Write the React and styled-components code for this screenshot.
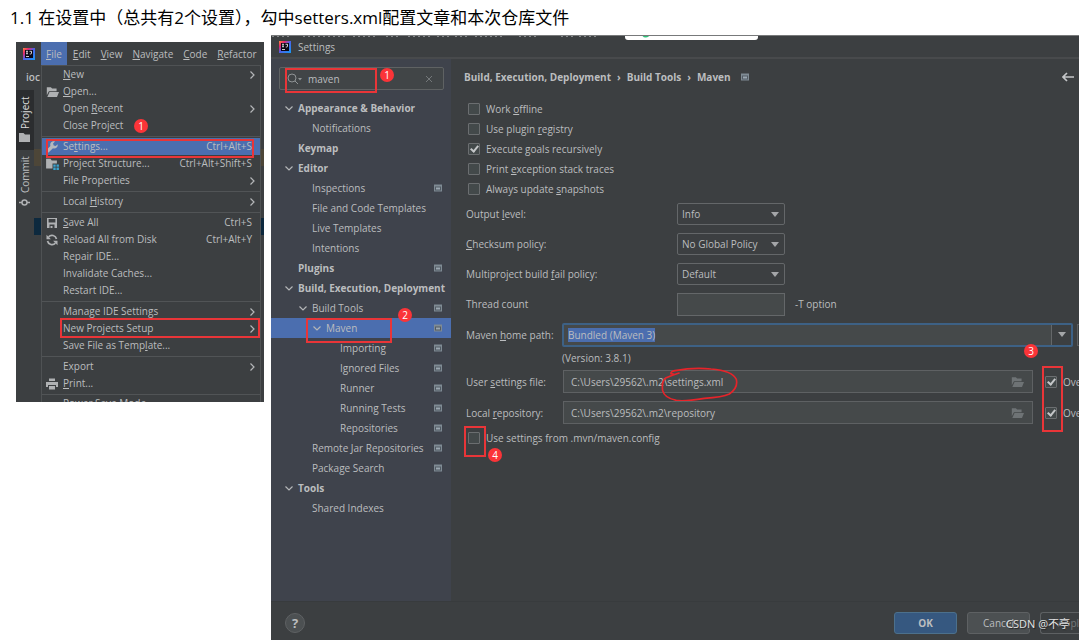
import { useEffect, useRef } from "react";
import styled, { createGlobalStyle, css } from "styled-components";

const menuTitles = ["_File", "_Edit", "_View", "_Navigate", "_Code", "_Refactor"];

const menuGroups = [
    [
        { text: "_New", sub: true },
        { text: "_Open...", icon: "folder" },
        { text: "Open _Recent", sub: true },
        { text: "Close Project" },
    ],
    [
        { text: "Se_ttings...", icon: "wrench", keys: "Ctrl+Alt+S", active: true },
        { text: "Project Structure...", icon: "structure", keys: "Ctrl+Alt+Shift+S" },
        { text: "File Properties", sub: true },
    ],
    [{ text: "Local _History", sub: true }],
    [
        { text: "_Save All", icon: "save", keys: "Ctrl+S" },
        { text: "Reload All from Disk", icon: "reload", keys: "Ctrl+Alt+Y" },
        { text: "Repair IDE..." },
        { text: "Invalidate Caches..." },
        { text: "Restart IDE..." },
    ],
    [
        { text: "Manage IDE Settings", sub: true },
        { text: "New Projects Setup", sub: true },
        { text: "Save File as Temp_late..." },
    ],
    [
        { text: "Export", sub: true },
        { text: "_Print...", icon: "print" },
    ],
    [{ text: "Power Save Mode", cut: true }],
];

const tree = [
    { text: "Appearance & Behavior", level: 0, open: true },
    { text: "Notifications", level: 1 },
    { text: "Keymap", level: 0 },
    { text: "Editor", level: 0, open: true },
    { text: "Inspections", level: 1, mark: true },
    { text: "File and Code Templates", level: 1 },
    { text: "Live Templates", level: 1 },
    { text: "Intentions", level: 1 },
    { text: "Plugins", level: 0, mark: true },
    { text: "Build, Execution, Deployment", level: 0, open: true },
    { text: "Build Tools", level: 1, open: true, mark: true },
    { text: "Maven", level: 2, open: true, mark: true, active: true },
    { text: "Importing", level: 3, mark: true },
    { text: "Ignored Files", level: 3, mark: true },
    { text: "Runner", level: 3, mark: true },
    { text: "Running Tests", level: 3, mark: true },
    { text: "Repositories", level: 3, mark: true },
    { text: "Remote Jar Repositories", level: 1, mark: true },
    { text: "Package Search", level: 1, mark: true },
    { text: "Tools", level: 0, open: true },
    { text: "Shared Indexes", level: 1 },
];

const options = [
    { text: "Work _offline" },
    { text: "Use plugin _registry" },
    { text: "Execute _goals recursively", checked: true },
    { text: "Print _exception stack traces" },
    { text: "Always update _snapshots" },
];

const policies = [
    { id: "output", text: "Output _level:", value: "Info" },
    { id: "checksum", text: "_Checksum policy:", value: "No Global Policy" },
    { id: "fail", text: "Multiproject build _fail policy:", value: "Default" },
];

// "_" stands before the letter that gets the underline
function Mnemonic({ text }){
    const at = text.indexOf("_");
    if (at < 0) return <span>{text}</span>;
    return (
        <span>
            {text.slice(0, at)}<u>{text[at + 1]}</u>{text.slice(at + 2)}
        </span>
    );
}

function Logo(){
    return (
        <svg width="12" height="12" viewBox="0 0 24 24" aria-hidden="true">
            <defs>
                <linearGradient id="idea" x1="0" y1="0" x2="1" y2="1">
                    <stop offset="0" stopColor="#fc8b3a" />
                    <stop offset="0.25" stopColor="#e8286c" />
                    <stop offset="0.5" stopColor="#4b62e8" />
                    <stop offset="1" stopColor="#159bf5" />
                </linearGradient>
            </defs>
            <rect width="24" height="24" fill="url(#idea)" />
            <rect x="4" y="4" width="16" height="16" fill="#0b0715" />
            <path d="M6 6.500h4M8 6.500v5M6 11.500h4M13 6.500h4v4q0 1.500-2 1.500h-1.500M6 17h6" stroke="#fff" strokeWidth="1.600" fill="none" />
        </svg>
    );
}

function Chevron({ right }){
    return (
        <svg width="8" height="8" viewBox="0 0 8 8" fill="none" stroke="#b4b6b8" strokeWidth="1.200" aria-hidden="true">
            <path d={right ? "M2.500 0.500 6 4 2.500 7.500" : "M0.500 2.500 4 6 7.500 2.500"} />
        </svg>
    );
}

function FolderIcon({ color = "#afb1b3" }){
    return (
        <svg width="13" height="12" viewBox="0 0 16 14" fill={color} aria-hidden="true">
            <path d="M1 1h5l1.500 1.800H13V6H3.600L1 11z" />
            <path d="M4.300 7H16l-2.500 6H1.600z" />
        </svg>
    );
}

function ProjectMark(){
    return (
        <svg width="8" height="8" viewBox="0 0 8 8" aria-hidden="true">
            <path d="M0 0.500h8v7H0z" fill="#7f8b94" />
            <path d="M1 2.500h6v4H1z" fill="#535b64" />
            <path d="M2 3.500h4v2H2z" fill="#9aa7b0" />
        </svg>
    );
}

function MenuIcon({ name }){
    if (name === "folder") return <FolderIcon />;
    if (name === "wrench") return (
        <svg width="12" height="12" viewBox="0 0 16 16" fill="#b4b8bd" aria-hidden="true">
            <path d="M15.500 4.200 12.900 6.800 10.300 6 9.400 3.300 12 .8C10.200 0 8.200.4 6.900 1.700 5.600 3 5.300 4.900 5.900 6.500L.9 11.600c-.9.900-.9 2.300 0 3.200s2.300.9 3.200 0L9.300 9.700c1.700.7 3.600.4 4.900-.9 1.200-1.200 1.600-3 1.300-4.600z" />
        </svg>
    );
    if (name === "structure") return (
        <svg width="13" height="12" viewBox="0 0 16 15" aria-hidden="true">
            <path d="M0 1h5.500L7 3h6.500v4H8v6H0z" fill="#afb1b3" />
            <path d="M9 8h3v3H9zM13 8h3v3h-3zM9 12h3v3H9zM13 12h3v3h-3z" fill="#3ba3cf" />
        </svg>
    );
    if (name === "save") return (
        <svg width="12" height="12" viewBox="0 0 12 12" aria-hidden="true">
            <path fillRule="evenodd" fill="#afb1b3" d="M1 1h10v10H1zM2.600 2v3.400h6.800V2zM3.500 7.500V11h5V7.500z" />
            <path d="M4.500 9h2v2h-2z" fill="#afb1b3" />
        </svg>
    );
    if (name === "reload") return (
        <svg width="12" height="12" viewBox="0 0 12 12" aria-hidden="true">
            <path d="M10.500 5A4.600 4.600 0 0 0 2.600 2.900M1.500 7a4.600 4.600 0 0 0 7.900 2.100" fill="none" stroke="#afb1b3" strokeWidth="1.700" />
            <path d="M0.500 0.800v4.400h4.400zM11.500 11.200V6.800H7.100z" fill="#afb1b3" />
        </svg>
    );
    if (name === "print") return (
        <svg width="12" height="12" viewBox="0 0 12 12" fill="#afb1b3" aria-hidden="true">
            <path d="M3 0.500h6V3H3zM0 4h12v5h-2V7H2v2H0zM3 8h6v3.500H3z" />
        </svg>
    );
    return null;
}

function FileMenu(){
    return (
        <IdePanel>
            <MenuBar>
                <Logo />
                {menuTitles.map((title, i) => (
                    <MenuTitle key={title} $active={i === 0}><Mnemonic text={title} /></MenuTitle>
                ))}
            </MenuBar>
            <IdeBody>
                <IdeLeft>
                    <Crumb>ioc</Crumb>
                    <IdeTools>
                        <ToolColumn>
                            <ToolTab $active>
                                Project
                                <svg width="11" height="9" viewBox="0 0 11 9" fill="#afb1b3" aria-hidden="true"><path d="M0 0h4.500l1.500 1.500h5V9H0z" /></svg>
                            </ToolTab>
                            <ToolTab>
                                Commit
                                <svg width="11" height="11" viewBox="0 0 11 11" fill="none" stroke="#afb1b3" strokeWidth="1.500" aria-hidden="true">
                                    <circle cx="5.500" cy="5.500" r="2.500" /><path d="M0 5.500h3M8 5.500h3" />
                                </svg>
                            </ToolTab>
                        </ToolColumn>
                        <EditorEdge $width={7} $start={59} />
                    </IdeTools>
                </IdeLeft>
                <Menu>
                    {menuGroups.map((group, i) => (
                        <MenuGroup key={i}>
                            {group.map((item) => (
                                <MenuRow key={item.text} $active={item.active} $cut={item.cut}>
                                    <IconSlot>{item.icon && <MenuIcon name={item.icon} />}</IconSlot>
                                    <Mnemonic text={item.text} />
                                    {item.keys && <Keys>{item.keys}</Keys>}
                                    {item.sub && <SubArrow><Chevron right /></SubArrow>}
                                </MenuRow>
                            ))}
                        </MenuGroup>
                    ))}
                </Menu>
                <EditorEdge $width={3} $start={84} />
            </IdeBody>
            <Frame style={{ left: 30, top: 97, width: 208, height: 19 }} />
            <Frame style={{ left: 44, top: 276, width: 200, height: 20 }} />
            <Badge style={{ left: 118, top: 77 }}>1</Badge>
        </IdePanel>
    );
}

function Sidebar(){
    return (
        <Side>
            <SearchBox>
                <svg width="15" height="12" viewBox="0 0 15 12" fill="none" stroke="#8f9395" aria-hidden="true">
                    <circle cx="5" cy="5" r="4" /><path d="m8 8 3 3" /><path d="M11 5h4l-2 2.500z" fill="#8f9395" stroke="none" />
                </svg>
                <SearchInput aria-label="Search settings" defaultValue="maven" />
                <ClearButton aria-label="Clear">
                    <svg width="8" height="8" viewBox="0 0 8 8" stroke="#74787a" aria-hidden="true"><path d="m1 1 6 6M7 1 1 7" /></svg>
                </ClearButton>
            </SearchBox>
            <Tree>
                {tree.map((node) => (
                    <TreeRow key={node.text} $level={node.level} $active={node.active}>
                        <Toggle>{node.open && <Chevron />}</Toggle>
                        <TreeText>{node.text}</TreeText>
                        {node.mark && <ProjectMark />}
                    </TreeRow>
                ))}
            </Tree>
        </Side>
    );
}

function PathRow({ id, text, value, circled }){
    return (
        <FormRow $tall>
            <PathLabel htmlFor={id}><Mnemonic text={text} /></PathLabel>
            <PathField>
                <PathInput id={id} defaultValue={value} />
                <FolderIcon color="#6e7375" />
                {circled && (
                    <Scribble viewBox="0 0 234 108" aria-hidden="true">
                        <path d="M39 25 30 23Q28 17 42 14Q100 3 150 9Q214 14 226 40Q232 66 205 84Q184 94 130 97Q70 107 46 103Q10 96 5 74Q1 46 14 36Q30 29 54 21" />
                    </Scribble>
                )}
            </PathField>
            <Override>
                <Check type="checkbox" defaultChecked />
                Override
            </Override>
        </FormRow>
    );
}

function MavenPage(){
    const home = useRef(null);

    useEffect(() => {
        home.current.focus();
        home.current.select();
    }, []);

    return (
        <Page>
            <Path>
                Build, Execution, Deployment <i>›</i> Build Tools <i>›</i> Maven
                <PathMark><ProjectMark /></PathMark>
                <BackButton aria-label="Back">
                    <svg width="12" height="10" viewBox="0 0 12 10" fill="none" stroke="#c4c6c8" strokeWidth="1.700" aria-hidden="true"><path d="M5 1 1 5l4 4M1 5h11" /></svg>
                </BackButton>
            </Path>
            {options.map((option) => (
                <CheckRow key={option.text}>
                    <Check type="checkbox" defaultChecked={option.checked} />
                    <Mnemonic text={option.text} />
                </CheckRow>
            ))}
            {policies.map((policy) => (
                <FormRow key={policy.id}>
                    <FormLabel htmlFor={policy.id}><Mnemonic text={policy.text} /></FormLabel>
                    <SelectBox>
                        <Select id={policy.id} defaultValue={policy.value}>
                            <option>{policy.value}</option>
                        </Select>
                        <Caret />
                    </SelectBox>
                </FormRow>
            ))}
            <FormRow>
                <FormLabel htmlFor="threads">Thread count</FormLabel>
                <ThreadInput id="threads" />
                <Hint>-T option</Hint>
            </FormRow>
            <FormRow $tall>
                <PathLabel htmlFor="home"><Mnemonic text="Maven _home path:" /></PathLabel>
                <Combo>
                    <HomeInput id="home" ref={home} defaultValue="Bundled (Maven 3)" />
                    <ComboButton aria-label="Show list"><Caret /></ComboButton>
                </Combo>
                <BrowseEdge />
            </FormRow>
            <Version>(Version: 3.8.1)</Version>
            <PathRow id="user" text="User _settings file:" value="C:\Users\29562\.m2\settings.xml" circled />
            <PathRow id="repo" text="Local _repository:" value="C:\Users\29562\.m2\repository" />
            <CheckRow>
                <Check type="checkbox" />
                Use settings from .mvn/maven.config
            </CheckRow>
            <Frame style={{ left: 13, top: 367, width: 22, height: 31 }} />
            <Badge style={{ left: 37, top: 389 }}>4</Badge>
            <Frame style={{ right: 16, top: 307, width: 21, height: 66 }} />
            <Badge style={{ right: 41, top: 285 }}>3</Badge>
        </Page>
    );
}

export default function App(){
    return (
        <>
            <GlobalStyle />
            <Heading>1.1 在设置中（总共有2个设置），勾中setters.xml配置文章和本次仓库文件</Heading>
            <Columns>
                <FileMenu />
                <SettingsWindow>
                    <BackdropEdge aria-hidden="true">
                        <path d="M1 1H18M32 1h45M82 1h24M115 1h14M137 1h22M166 1h12M184 1h14M204 1h28M248 1h20M290 1h12M308 1h18" />
                    </BackdropEdge>
                    <Popup>
                        <svg width="14" height="5" viewBox="0 0 14 5" aria-hidden="true"><path d="M4 0q2 3 6 0" fill="none" stroke="#2fc27a" strokeWidth="2" /><path d="M0 0h2v1H0z" fill="#999" /></svg>
                    </Popup>
                    <TitleBar><Logo />Settings</TitleBar>
                    <WindowBody>
                        <Sidebar />
                        <MavenPage />
                    </WindowBody>
                    <Footer>
                        <HelpButton>?</HelpButton>
                        <Button $primary>OK</Button>
                        <Button>Cancel</Button>
                        <Button $cut disabled>Apply</Button>
                    </Footer>
                    <Frame style={{ left: 14, top: 32, width: 92, height: 25 }} />
                    <Badge style={{ left: 109, top: 32 }}>1</Badge>
                    <Frame style={{ left: 35, top: 282, width: 86, height: 25 }} />
                    <Badge style={{ left: 127, top: 272 }}>2</Badge>
                    <Watermark>CSDN @不亭</Watermark>
                </SettingsWindow>
            </Columns>
        </>
    );
}

const GlobalStyle = createGlobalStyle`
    *, *::after {
        box-sizing: border-box;
    }

    body {
        margin: 0;
        background: #fff;
        color: #bbbdbf;
        font-family: "Open Sans", "Noto Sans", "Noto Sans CJK SC", sans-serif;
        font-size: 10px;
        overflow: hidden;
    }

    button, input, select {
        font: inherit;
        color: inherit;
        margin: 0;
        padding: 0;
        border: none;
        background: none;
        outline: none;
    }

    svg {
        flex: none;
        display: block;
    }

    u {
        text-underline-offset: 1px;
    }
`;

const Heading = styled.h1`
    margin: 0;
    padding: 6px 0 5px 10px;
    line-height: 24px;
    font-family: "Open Sans", "Noto Sans CJK SC", sans-serif;
    font-size: 17px;
    font-weight: 400;
    color: #000;
    white-space: nowrap;
`;

const Columns = styled.main`
    display: grid;
    grid-template-columns: 248px 1fr;
    gap: 7px;
    align-items: start;
    padding: 0 8px 0 16px;
`;

const IdePanel = styled.section`
    position: relative;
    margin-top: 7px;
    background: #3c3f41;
`;

const MenuBar = styled.nav`
    display: flex;
    align-items: center;
    height: 23px;
    padding-left: 7px;

    svg{
        margin-right: 6px;
    }
`;

const MenuTitle = styled.button`
    height: 23px;
    padding: 0 5px;
    background: ${({ $active }) => ($active ? "#4b6eaf" : "transparent")};

    &:first-of-type{
        margin-right: 1px;
    }
`;

const IdeBody = styled.div`
    display: flex;
`;

const IdeLeft = styled.div`
    display: flex;
    flex-direction: column;
    flex: none;
    width: 25px;
`;

const IdeTools = styled.div`
    display: flex;
    flex: 1;
`;

const ToolColumn = styled.div`
    flex: none;
    width: 18px;
`;

const Crumb = styled.div`
    height: 25px;
    line-height: 25px;
    padding-left: 10px;
    overflow: hidden;
    font-weight: 600;
`;

const ToolTab = styled.button`
    display: flex;
    flex-direction: row-reverse;
    align-items: center;
    justify-content: flex-end;
    gap: 4px;
    width: 18px;
    height: 60px;
    padding: ${({ $active }) => ($active ? "8px" : "2px")} 0;
    writing-mode: vertical-rl;
    transform: rotate(180deg);
    background: ${({ $active }) => ($active ? "#2b2d2f" : "transparent")};
    color: ${({ $active }) => ($active ? "#dcdddd" : "inherit")};

    svg{
        transform: rotate(180deg);
    }
`;

const EditorEdge = styled.div`
    flex: none;
    width: ${({ $width }) => $width}px;
    background: ${({ $start }) => `linear-gradient(
        #3c3f41 ${$start}px, #4d4638 ${$start}px, #4d4638 ${$start + 17}px, #3c3f41 ${$start + 17}px,
        #3c3f41 ${$start + 69}px, #0d293e ${$start + 69}px, #0d293e ${$start + 86}px, #3c3f41 ${$start + 86}px
    )`};
`;

const Menu = styled.div`
    flex: 1;
    min-width: 0;
    border: 1px solid #4f5254;
    border-bottom: none;
`;

const MenuGroup = styled.div`
    & + &{
        padding-top: 1px;
        margin-top: 2px;
        border-top: 1px solid #515456;
    }
`;

const MenuRow = styled.button`
    display: flex;
    align-items: center;
    width: 100%;
    height: ${({ $cut }) => ($cut ? "6px" : "17px")};
    padding: 0 8px 0 4px;
    line-height: 17px;
    white-space: nowrap;
    background: ${({ $active }) => ($active ? "#4b6eaf" : "transparent")};
    ${({ $cut }) => $cut && css`
        align-items: flex-start;
        line-height: 14px;
        overflow: hidden;
    `}
`;

const IconSlot = styled.span`
    width: 17px;
`;

const Keys = styled.span`
    margin-left: auto;
`;

const SubArrow = styled.span`
    margin-left: auto;
    margin-right: -4px;
`;

const SettingsWindow = styled.section`
    position: relative;
    display: flex;
    flex-direction: column;
    min-height: calc(100vh - 35px);
    min-width: 0;
    overflow: hidden;
    background: #3c3f41;
    border-top: 1px solid #77797a;
`;

const BackdropEdge = styled.svg`
    position: absolute;
    top: -1px;
    left: 0;
    width: 340px;
    height: 2px;
    stroke: #85888a;
    stroke-width: 2;
    stroke-dasharray: 2 3;
`;

const Popup = styled.div`
    position: absolute;
    top: -1px;
    left: 354px;
    width: 133px;
    height: 5px;
    padding-left: 14px;
    background: #fff;
    border-radius: 0 0 3px 3px;
`;

const TitleBar = styled.header`
    display: flex;
    align-items: center;
    gap: 7px;
    height: 23px;
    padding-left: 8px;
    border-bottom: 2px solid #484a4c;
`;

const WindowBody = styled.div`
    display: flex;
    flex: 1;
`;

const Side = styled.aside`
    width: 180px;
    padding-top: 8px;
    background: #3f434c;
`;

const SearchBox = styled.div`
    display: flex;
    align-items: center;
    gap: 6px;
    height: 23px;
    margin: 0 7px 8px 8px;
    padding: 0 10px 0 7px;
    border: 1px solid #5f6263;
    background: #414547;
    border-radius: 2px;
`;

const SearchInput = styled.input`
    flex: 1;
    min-width: 0;
`;

const ClearButton = styled.button`
    display: flex;
`;

const Tree = styled.div`
    display: flex;
    flex-direction: column;
`;

const TreeRow = styled.div`
    display: flex;
    align-items: center;
    height: 20px;
    padding-left: ${({ $level }) => 14 + $level * 14}px;
    padding-right: 9px;
    white-space: nowrap;
    font-weight: ${({ $level }) => ($level === 0 ? 700 : 400)};
    background: ${({ $active }) => ($active ? "#4b6eaf" : "transparent")};
`;

const Toggle = styled.span`
    flex: none;
    width: 13px;
`;

const TreeText = styled.span`
    flex: 1;
    min-width: 0;
`;

const Page = styled.div`
    position: relative;
    flex: 1;
    min-width: 0;
    padding-left: 13px;
`;

const Path = styled.div`
    display: flex;
    align-items: center;
    gap: 6px;
    height: 36px;
    margin-bottom: 4px;
    padding-right: 5px;
    font-weight: 700;

    i{
        font-style: normal;
    }
`;

const PathMark = styled.span`
    margin-left: 4px;
`;

const BackButton = styled.button`
    margin-left: auto;
`;

const CheckRow = styled.label`
    display: flex;
    align-items: center;
    gap: 6px;
    height: 20px;
    padding-left: 4px;
`;

const Check = styled.input`
    appearance: none;
    flex: none;
    width: 12px;
    height: 12px;
    border: 1px solid #6b6e70;
    border-radius: 1px;
    background: #43494a;

    &:checked::after{
        content: "";
        display: block;
        width: 5px;
        height: 8px;
        margin: 0 0 0 3px;
        border: solid #c4c6c8;
        border-width: 0 2px 2px 0;
        transform: rotate(40deg);
    }
`;

const FormRow = styled.div`
    display: flex;
    align-items: center;
    height: ${({ $tall }) => ($tall ? "31px" : "30px")};
    padding-left: 2px;
`;

const FormLabel = styled.label`
    width: 211px;
`;

const PathLabel = styled.label`
    flex: none;
    width: 97px;
    white-space: nowrap;
`;

const SelectBox = styled.div`
    display: flex;
    align-items: center;
    position: relative;
    width: 108px;
    height: 22px;
    border: 1px solid #646769;
    border-radius: 2px;
`;

const Select = styled.select`
    appearance: none;
    width: 100%;
    height: 20px;
    padding-left: 4px;
`;

const Caret = styled.span`
    width: 0;
    height: 0;
    border: 4px solid transparent;
    border-top: 5px solid #a4a6a8;
    border-bottom: none;

    ${SelectBox} &{
        position: absolute;
        right: 5px;
        pointer-events: none;
    }
`;

const ThreadInput = styled.input`
    width: 108px;
    height: 23px;
    border: 1px solid #646769;
    background: #45494a;
`;

const Hint = styled.span`
    margin-left: 10px;
`;

const Combo = styled.div`
    display: flex;
    flex: 1;
    align-items: stretch;
    min-width: 0;
    height: 24px;
    margin-right: 4px;
    margin-left: -1px;
    border: 2px solid #3d6185;
    border-radius: 2px;
    background: #45494a;
`;

const HomeInput = styled.input`
    flex: 1;
    min-width: 0;
    padding-left: 4px;

    &::selection{
        background: #4b6eaf;
        color: #bbbdbf;
    }
`;

const ComboButton = styled.button`
    display: flex;
    align-items: center;
    justify-content: center;
    width: 20px;
    border-left: 1px solid #646769;
    background: #3c3f41;
`;

const BrowseEdge = styled.span`
    width: 2px;
    height: 22px;
    border: 1px solid #5e6163;
    border-right: none;
`;

const Version = styled.div`
    height: 16px;
    line-height: 16px;
    padding-left: 98px;
`;

const PathField = styled.div`
    position: relative;
    display: flex;
    align-items: center;
    flex: 1;
    min-width: 0;
    height: 23px;
    padding-right: 8px;
    border: 1px solid #5e6163;
    background: #45494a;
`;

const PathInput = styled.input`
    flex: 1;
    min-width: 0;
    padding-left: 7px;
`;

const Scribble = styled.svg`
    position: absolute;
    left: 97px;
    top: -5px;
    width: 78px;
    height: 36px;
    fill: none;
    stroke: #e6242a;
    stroke-width: 5;
    stroke-linecap: round;
`;

const Override = styled.label`
    display: flex;
    align-items: center;
    gap: 6px;
    flex: none;
    width: 34px;
    margin-left: 12px;
    overflow: hidden;
`;

const Footer = styled.footer`
    display: flex;
    align-items: center;
    gap: 10px;
    height: 39px;
    padding: 4px 0 0 14px;
    border-top: 1px solid #383b3d;
`;

const HelpButton = styled.button`
    width: 20px;
    height: 20px;
    margin-right: auto;
    border: 1px solid #5e6163;
    border-radius: 50%;
    background: #4c5052;
    font-size: 13px;
    line-height: 18px;
    font-weight: 700;
`;

const Button = styled.button`
    flex: none;
    width: ${({ $cut }) => ($cut ? "39px" : "63px")};
    height: 22px;
    border: 1px solid ${({ $primary }) => ($primary ? "#4c708c" : "#5e6163")};
    border-radius: 3px;
    background: ${({ $primary }) => ($primary ? "#365880" : "#4c5052")};
    font-weight: ${({ $primary }) => ($primary ? 700 : 400)};
    ${({ $cut }) => $cut && css`
        padding-left: 17px;
        border-right: none;
        border-radius: 3px 0 0 3px;
        background: #3c3f41;
        color: #777a7c;
        text-align: left;
        overflow: hidden;
    `}
`;

const Frame = styled.div`
    position: absolute;
    border: 2px solid #e93538;
    pointer-events: none;
`;

const Badge = styled.span`
    position: absolute;
    width: 14px;
    height: 14px;
    border-radius: 50%;
    background: #fb3438;
    color: #fff;
    line-height: 14px;
    text-align: center;
`;

const Watermark = styled.span`
    position: absolute;
    right: 9px;
    bottom: 8px;
    line-height: 16px;
    font-size: 11px;
    color: #e2e3e4;
    text-shadow: 1px 1px 1px #222;
    pointer-events: none;
`;
